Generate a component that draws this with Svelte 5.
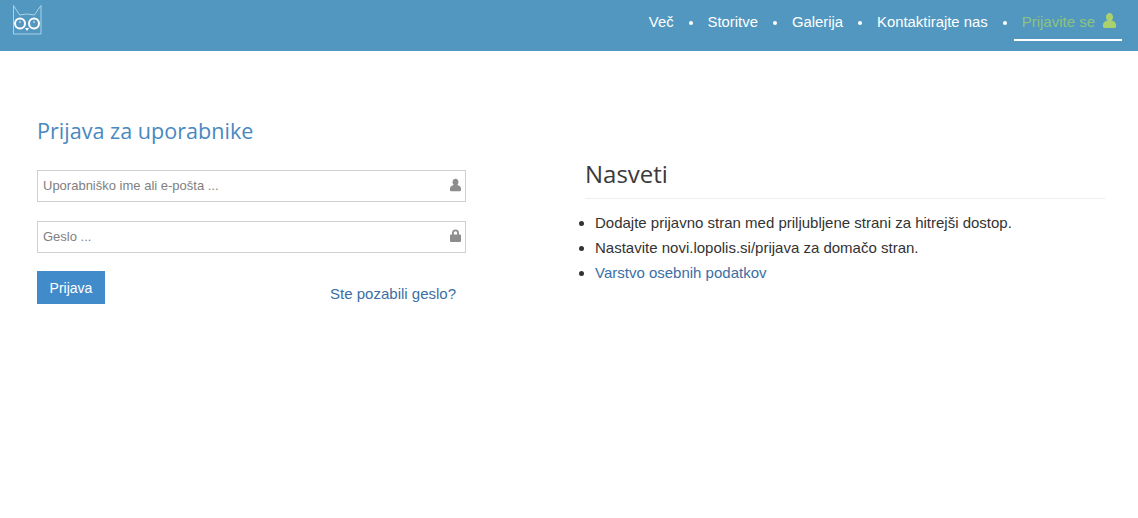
<script>
  const links = ['Več', 'Storitve', 'Galerija', 'Kontaktirajte nas'];
  const tips = [
    'Dodajte prijavno stran med priljubljene strani za hitrejši dostop.',
    'Nastavite novi.lopolis.si/prijava za domačo stran.'
  ];
  const userPath = 'M6.500 0C8.600 0 10 1.700 10 4C10 5.500 9.400 6.800 8.500 7.600C11 8 13 9.500 13 12V13.500C13 14.300 12.300 15 11.500 15H1.500C.7 15 0 14.300 0 13.500V12C0 9.500 2 8 4.500 7.600C3.600 6.800 3 5.500 3 4C3 1.700 4.400 0 6.500 0Z';
</script>

<nav class="topbar">
  <svg class="logo" width="30" height="32" viewBox="0 0 30 32" fill="none">
    <path d="M1.500 .5V29H29V.5L22.300 10Q15 8 7.700 10Z" stroke="#a9d3ea" stroke-width="1"/>
    <circle cx="8" cy="18.500" r="5" stroke="#fff" stroke-width="2"/>
    <circle cx="22" cy="18.500" r="5" stroke="#fff" stroke-width="2"/>
    <circle cx="8" cy="17" r=".8" fill="#fff"/>
    <circle cx="22" cy="17" r=".8" fill="#fff"/>
    <path d="M13 23L15 26L17 23Z" fill="#fff"/>
  </svg>
  <ul class="menu">
    {#each links as link}
      <li><a href="#top">{link}</a></li>
      <li class="dot"></li>
    {/each}
    <li class="login">
      <a href="#top">Prijavite se</a>
      <svg width="13" height="15" viewBox="0 0 13 15"><path d={userPath} fill="#a9d16e"/></svg>
    </li>
  </ul>
</nav>

<main class="page">
  <section class="login-col">
    <h2>Prijava za uporabnike</h2>
    <div class="field">
      <input type="text" placeholder="Uporabniško ime ali e-pošta ..." />
      <svg class="field-icon" width="11" height="14" viewBox="0 0 13 15"><path d={userPath} fill="#8d8d8d"/></svg>
    </div>
    <div class="field">
      <input type="password" placeholder="Geslo ..." />
      <svg class="field-icon" width="11" height="13" viewBox="0 0 11 13"><path d="M2 5.500V4a3.500 3.500 0 0 1 7 0v1.500h1a1 1 0 0 1 1 1V12a1 1 0 0 1-1 1H1a1 1 0 0 1-1-1V6.500a1 1 0 0 1 1-1zM3.800 5.500h3.400V4a1.700 1.700 0 0 0-3.400 0z" fill="#8d8d8d"/></svg>
    </div>
    <div class="actions">
      <button>Prijava</button>
      <a href="#top">Ste pozabili geslo?</a>
    </div>
  </section>

  <section class="tips-col">
    <h3>Nasveti</h3>
    <ul>
      {#each tips as tip}
        <li>{tip}</li>
      {/each}
      <li><a href="#top">Varstvo osebnih podatkov</a></li>
    </ul>
  </section>
</main>

<style>
  :global(body) {
    margin: 0;
    background: #fff;
    font-family: "Liberation Sans", Arial, sans-serif;
    font-size: 14px;
    color: #333;
  }

  a {
    text-decoration: none;
  }

  .topbar {
    height: 51px;
    background: #5297c0;
    display: flex;
    justify-content: space-between;
    box-sizing: border-box;
  }

  .logo {
    margin: 5px 0 0 12px;
  }

  .menu {
    list-style: none;
    display: flex;
    margin: 0 16px 0 0;
    padding: 0;
    height: 41px;
    align-items: center;
  }

  .menu a {
    color: #fff;
    font-size: 14.850px;
    position: relative;
    top: 1px;
  }

  .dot {
    width: 4px;
    height: 4px;
    border-radius: 50%;
    background: #fff;
    margin: 4px 15px 0;
  }

  .login {
    display: flex;
    align-items: center;
    gap: 8px;
    height: 41px;
    box-sizing: border-box;
    padding: 0 6px 0 8px;
    border-bottom: 2px solid #fff;
    margin-left: -8px;
  }

  .menu .login a {
    color: #8cc47f;
    font-size: 15px;
    top: 2px;
  }

  .login svg {
    position: relative;
    top: 1px;
  }

  .page {
    display: flex;
    padding-left: 37px;
  }

  .login-col {
    width: 429px;
    margin-right: 119px;
  }

  h2 {
    margin: 65px 0 25px;
    font: 400 21.600px/29px "Open Sans", sans-serif;
    color: #4a88c0;
  }

  .field {
    position: relative;
    margin-bottom: 19px;
  }

  input {
    display: block;
    width: 100%;
    height: 32px;
    box-sizing: border-box;
    border: 1px solid #d0d0d0;
    padding: 0 5px 2px;
    font: 13px "Liberation Sans", Arial, sans-serif;
    outline: none;
  }

  input::placeholder {
    color: #808080;
    opacity: 1;
  }

  .field-icon {
    position: absolute;
    right: 5px;
    top: 8px;
  }

  .actions {
    display: flex;
    justify-content: space-between;
    align-items: flex-end;
    margin-top: -1px;
  }

  button {
    width: 68px;
    height: 33px;
    border: 0;
    background: #428bca;
    color: #fff;
    font: 14px "Liberation Sans", Arial, sans-serif;
    padding: 0;
  }

  .actions a {
    color: #3a6fa5;
    font-size: 15px;
    margin-right: 10px;
    line-height: 20px;
  }

  .tips-col {
    width: 520px;
    padding-top: 107px;
  }

  h3 {
    margin: 0 0 11px;
    padding: 0 0 9px;
    border-bottom: 1px solid #eee;
    font: 400 24px/31px "Open Sans", sans-serif;
    color: #3a3a3a;
  }

  .tips-col ul {
    margin: 0;
    padding-left: 10px;
    font-size: 15px;
    line-height: 25px;
  }

  .tips-col a {
    color: #3a6fa5;
  }
</style>
